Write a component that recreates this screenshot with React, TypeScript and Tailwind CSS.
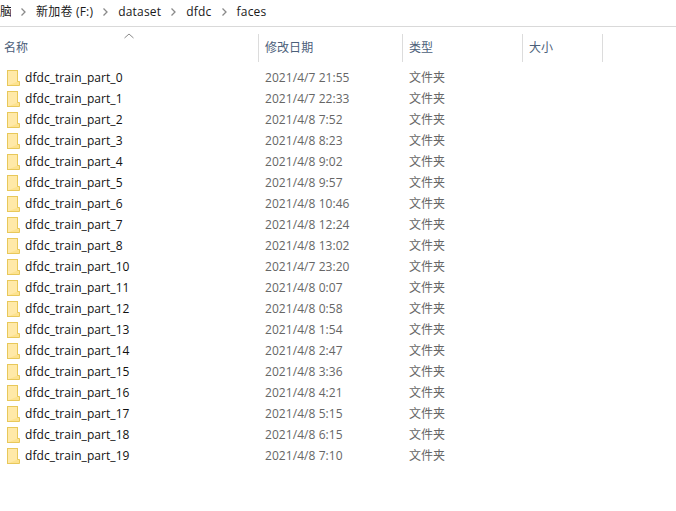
const rows = [
  ["dfdc_train_part_0", "2021/4/7 21:55"],
  ["dfdc_train_part_1", "2021/4/7 22:33"],
  ["dfdc_train_part_2", "2021/4/8 7:52"],
  ["dfdc_train_part_3", "2021/4/8 8:23"],
  ["dfdc_train_part_4", "2021/4/8 9:02"],
  ["dfdc_train_part_5", "2021/4/8 9:57"],
  ["dfdc_train_part_6", "2021/4/8 10:46"],
  ["dfdc_train_part_7", "2021/4/8 12:24"],
  ["dfdc_train_part_8", "2021/4/8 13:02"],
  ["dfdc_train_part_10", "2021/4/7 23:20"],
  ["dfdc_train_part_11", "2021/4/8 0:07"],
  ["dfdc_train_part_12", "2021/4/8 0:58"],
  ["dfdc_train_part_13", "2021/4/8 1:54"],
  ["dfdc_train_part_14", "2021/4/8 2:47"],
  ["dfdc_train_part_15", "2021/4/8 3:36"],
  ["dfdc_train_part_16", "2021/4/8 4:21"],
  ["dfdc_train_part_17", "2021/4/8 5:15"],
  ["dfdc_train_part_18", "2021/4/8 6:15"],
  ["dfdc_train_part_19", "2021/4/8 7:10"],
]

const crumbs = ["新加卷 (F:)", "dataset", "dfdc", "faces"]

function Chevron() {
  return (
    <svg width="5" height="8" viewBox="0 0 5 8" className="mx-[10px] shrink-0">
      <path d="M0.5 0.5 L4 4 L0.5 7.5" fill="none" stroke="#8a8a8a" strokeWidth="1.3" />
    </svg>
  )
}

function FolderIcon() {
  return (
    <svg width="13" height="16" viewBox="0 0 13 16" className="shrink-0">
      <rect x="0.5" y="0.5" width="10" height="15" fill="#ffe9a8" stroke="#e8c85a" />
      <path d="M10.5 11.5H12.5V15.5H1" fill="#fde28f" stroke="#e8c85a" />
    </svg>
  )
}

function HeaderCell({ label, width, pad }: { label: string; width: string; pad: string }) {
  return (
    <div className={`${width} ${pad} flex h-[28px] shrink-0 items-center border-r border-[#dcdcdc] text-[#4c607a]`}>
      {label}
    </div>
  )
}

export default function App() {
  return (
    <div className="h-[511px] w-[676px] overflow-hidden bg-white text-[12px] tracking-[0.06px] font-['Open_Sans','Noto_Sans_CJK_SC',sans-serif]">
      <div className="flex h-[27px] items-center border-b border-[#d9d9d9] pb-[3px] text-[#1a1a1a]">
        <span className="w-[11px] overflow-hidden">脑</span>
        <Chevron />
        {crumbs.map((crumb, i) => (
          <div key={crumb} className="flex items-center">
            <span className="tracking-[0.2px]">{crumb}</span>
            {i < crumbs.length - 1 && <Chevron />}
          </div>
        ))}
      </div>

      <div className="relative mt-[7px] flex">
        <svg width="10" height="6" viewBox="0 0 10 6" className="absolute left-[124px] top-[-1px]">
          <path d="M0.5 5 L5 1 L9.5 5" fill="none" stroke="#8a8a8a" />
        </svg>
        <HeaderCell label="名称" width="w-[259px]" pad="pl-[4px]" />
        <HeaderCell label="修改日期" width="w-[144px]" pad="pl-[6px]" />
        <HeaderCell label="类型" width="w-[120px]" pad="pl-[6px]" />
        <HeaderCell label="大小" width="w-[80px]" pad="pl-[6px]" />
      </div>

      <div className="mt-[5px]">
        {rows.map(([name, date]) => (
          <div key={name} className="flex h-[21px] items-center">
            <div className="flex w-[259px] shrink-0 items-center pl-[7px]">
              <FolderIcon />
              <span className="ml-[5px] text-[#111111]">{name}</span>
            </div>
            <div className="w-[144px] shrink-0 pl-[6px] text-[#666666]">{date}</div>
            <div className="pl-[6px] text-[#666666]">文件夹</div>
          </div>
        ))}
      </div>
    </div>
  )
}
